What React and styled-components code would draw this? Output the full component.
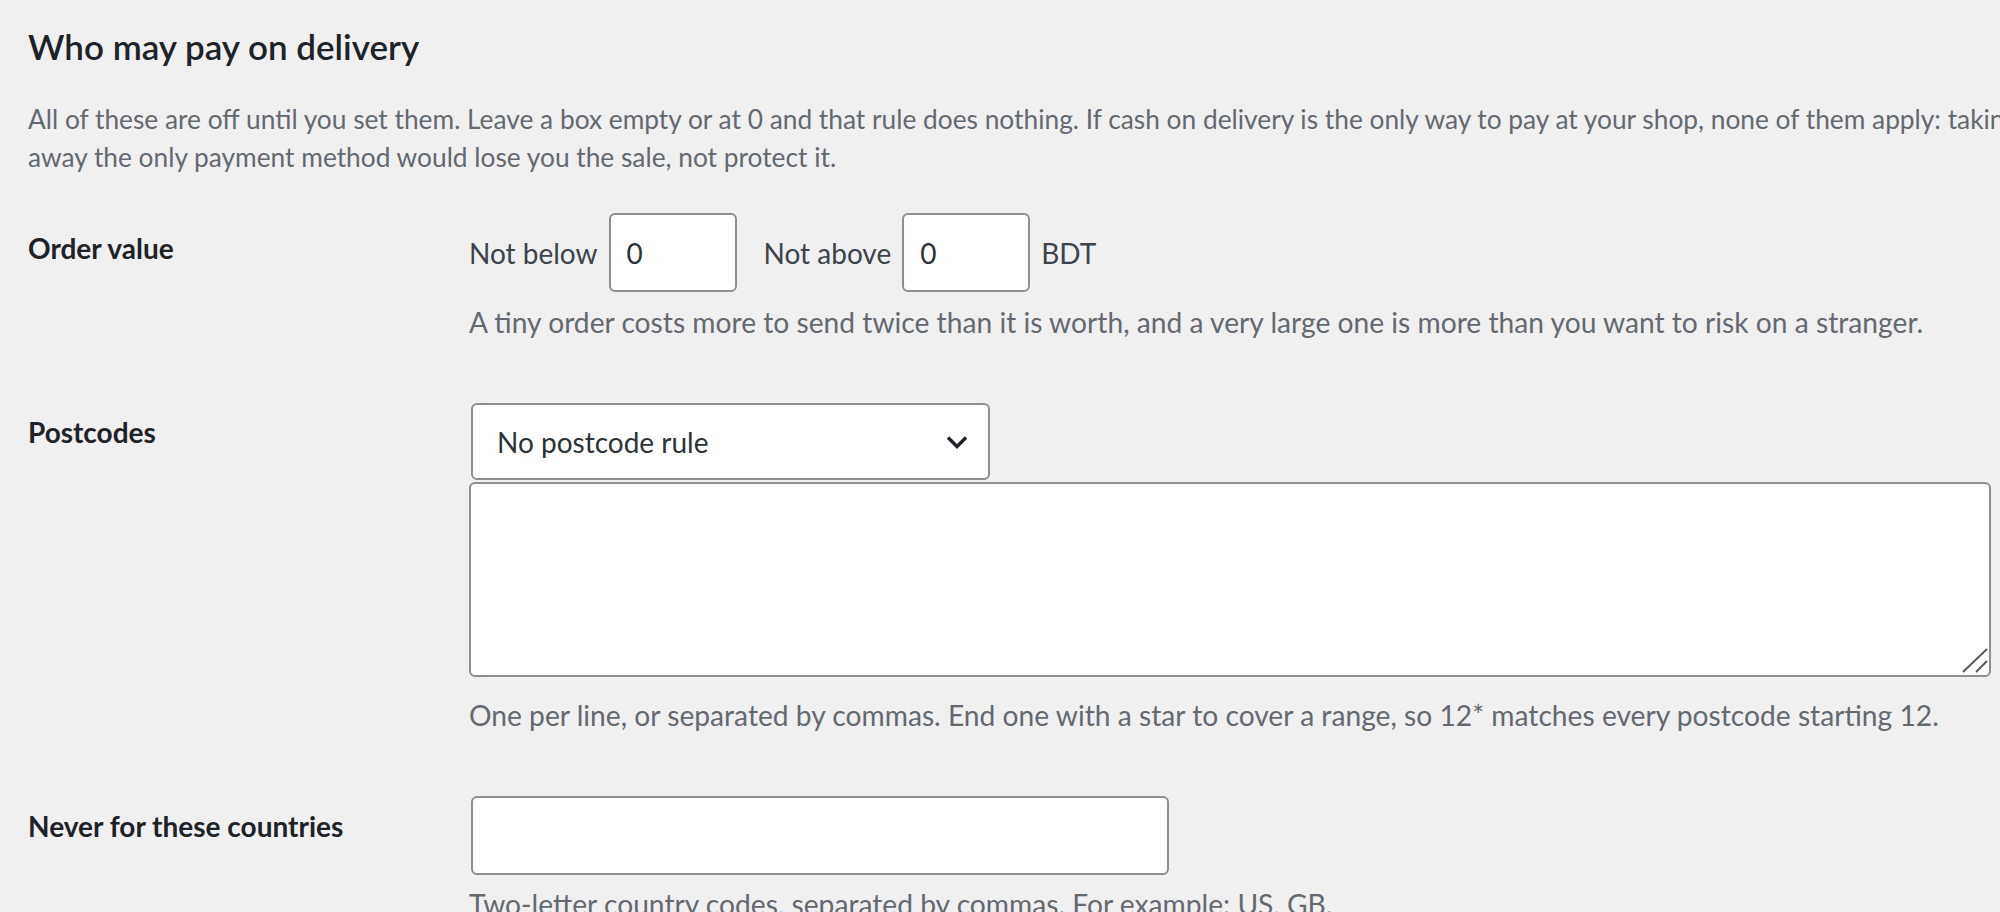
import React from "react";
import styled, { createGlobalStyle } from "styled-components";

const Global = createGlobalStyle`
  html, body { margin: 0; padding: 0; overflow: hidden; background: #f0f0f1; }
  body { font-family: "Lato", "Noto Sans", sans-serif; color: #3c434a; }
`;

const Page = styled.div`width: 2200px; padding: 24px 0 0 28px;`;
const Title = styled.h2`margin: 0; font-size: 35px; line-height: 44px; font-weight: 600; color: #1d2327;`;
const Intro = styled.p`margin: 32px 0 0; width: 2030px; font-size: 26.3px; line-height: 38px; color: #646970;`;

const Table = styled.div`margin-top: 37px; display: flex; flex-direction: column; gap: 62px;`;
const Row = styled.div`display: grid; grid-template-columns: 441px 1fr; align-items: start;`;
const Th = styled.div`padding-top: ${p => p.offset}px; font-size: 28px; line-height: 36px; font-weight: 700; color: #1d2327;`;
const Td = styled.div`display: flex; flex-direction: column; align-items: flex-start;`;

const Line = styled.div`display: flex; align-items: center; font-size: 28px; color: #3c434a;`;
const Bound = styled.label`display: flex; align-items: center; gap: 11px; margin-right: ${p => p.last ? 11 : 27}px;`;

const Field = styled.input`
  box-sizing: border-box; width: ${p => p.w}px; height: 79px; margin-left: ${p => p.ml || 0}px;
  padding: 0 16px; border: 2px solid #8c8f94; border-radius: 6px; background: #fff;
  font: inherit; font-size: 28px; color: #2c3338; outline: none;
`;

const SelectBox = styled.div`
  box-sizing: border-box; width: 519px; height: 77px; margin-left: 2px;
  display: flex; align-items: center; justify-content: space-between;
  padding: 0 20px 0 24px; border: 2px solid #8c8f94; border-radius: 6px; background: #fff;
  font-size: 28px; color: #2c3338;
`;

const AreaWrap = styled.div`position: relative; margin-top: 2px;`;
const Area = styled.textarea`
  box-sizing: border-box; display: block; width: 1522px; height: 195px; resize: none;
  border: 2px solid #8c8f94; border-radius: 6px; background: #fff; padding: 12px 16px;
  font: inherit; font-size: 28px; outline: none;
`;
const Grip = styled.svg`position: absolute; right: 2px; bottom: 4px; pointer-events: none;`;

const Note = styled.p`margin: ${p => p.mt}px 0 0; font-size: 28.2px; line-height: 38px; color: #646970; white-space: nowrap;`;

const Chevron = () => (
  <svg width="22" height="14" viewBox="0 0 22 14" fill="none">
    <path d="M2 2.5l9 9 9-9" stroke="#1d2327" strokeWidth="3.4" />
  </svg>
);

export default function App() {
  return (
    <Page>
      <Global />
      <Title>Who may pay on delivery</Title>
      <Intro>
        All of these are off until you set them. Leave a box empty or at 0 and that rule does nothing. If cash on delivery is the only way to pay at your shop, none of them apply: taking away the only payment method would lose you the sale, not protect it.
      </Intro>
      <Table>
        <Row>
          <Th offset={17}>Order value</Th>
          <Td>
            <Line>
              <Bound>Not below <Field w={128} defaultValue="0" /></Bound>
              <Bound last>Not above <Field w={128} defaultValue="0" /></Bound>
              BDT
            </Line>
            <Note mt={11}>A tiny order costs more to send twice than it is worth, and a very large one is more than you want to risk on a stranger.</Note>
          </Td>
        </Row>
        <Row>
          <Th offset={11}>Postcodes</Th>
          <Td>
            <SelectBox>No postcode rule <Chevron /></SelectBox>
            <AreaWrap>
              <Area />
              <Grip width="28" height="26" viewBox="0 0 28 26">
                <path d="M2 25L26 2M15 25L26 14" stroke="#50575e" strokeWidth="1.8" />
              </Grip>
            </AreaWrap>
            <Note mt={19}>One per line, or separated by commas. End one with a star to cover a range, so 12* matches every postcode starting 12.</Note>
          </Td>
        </Row>
        <Row>
          <Th offset={12}>Never for these countries</Th>
          <Td>
            <Field w={698} ml={2} />
            <Note mt={10}>Two-letter country codes, separated by commas. For example: US, GB.</Note>
          </Td>
        </Row>
      </Table>
    </Page>
  );
}
